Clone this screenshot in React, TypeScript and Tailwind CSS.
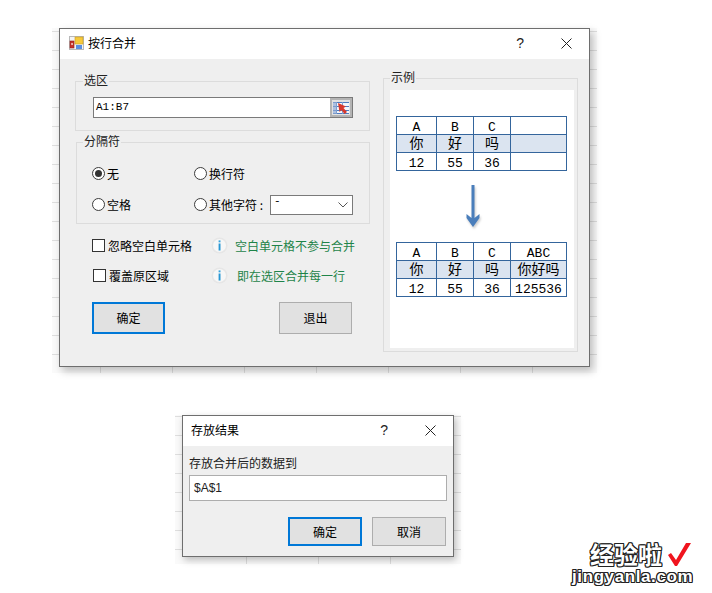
const cjk = "font-['Noto_Sans_CJK_SC','Noto_Sans',sans-serif]";

function AppIcon() {
  return (
    <svg width="15" height="14" viewBox="0 0 15 14" className="shrink-0">
      <rect x="0.5" y="0.5" width="14" height="13" fill="#f4f4f4" stroke="#b8b8b8" />
      <rect x="6" y="1" width="8" height="7" fill="#f6c93b" stroke="#c79a20" strokeWidth="0.6" />
      <rect x="1" y="5" width="4" height="7" fill="#c8322b" stroke="#8e1f1a" strokeWidth="0.6" />
      <rect x="2.3" y="7" width="1.5" height="2" fill="#f2d0c8" />
      <rect x="7" y="9" width="6" height="4" fill="#5a8fe0" />
    </svg>
  );
}

function RangeIcon() {
  return (
    <div className="flex h-[19px] w-[22px] items-center justify-center border-2 border-[#b4b4b4] bg-[#e2e2e2]">
      <svg width="16" height="12" viewBox="0 0 16 12">
        <rect x="0" y="0" width="16" height="12" fill="#f3f6fb" />
        <path d="M0 .5H16M0 4.5H16M0 8.5H16M0 11.5H16" stroke="#4d7cc0" strokeWidth="1" />
        <path d="M3.5 0V12M9.5 0V12" stroke="#7f9fcf" strokeWidth="1" />
        <rect x="0" y="0" width="3" height="12" fill="#8fa9d4" opacity="0.7" />
        <path d="M5 1L13 4.5L10.5 6L14 10L11.5 12L8.5 8L6.5 10Z" fill="#d8382c" />
      </svg>
    </div>
  );
}

function InfoIcon() {
  return (
    <svg width="17" height="17" viewBox="0 0 17 17" className="shrink-0">
      <circle cx="8.5" cy="8.5" r="8" fill="#e6e6e6" />
      <circle cx="8.5" cy="8.5" r="6.5" fill="#f7f7f7" />
      <rect x="7.6" y="3.4" width="1.9" height="1.9" fill="#35a3dc" />
      <rect x="7.6" y="6.5" width="1.9" height="7" fill="#2797d4" />
    </svg>
  );
}

function Radio({ checked, label, className = "" }: { checked?: boolean; label: string; className?: string }) {
  return (
    <div className={`flex items-center gap-[2px] ${className}`}>
      <span className="flex h-[13px] w-[13px] shrink-0 items-center justify-center rounded-full border border-[#3c3c3c] bg-white">
        {checked && <span className="h-[7px] w-[7px] rounded-full bg-[#333333]" />}
      </span>
      <span className="text-[12px] leading-[17px] text-black whitespace-pre">{label}</span>
    </div>
  );
}

function Group({ label, labelLeft, className, children }: { label: string; labelLeft: string; className: string; children?: React.ReactNode }) {
  return (
    <div className={`relative border border-[#dcdcdc] ${className}`}>
      <span className={`absolute -top-[10px] ${labelLeft} bg-[#efefef] px-[1px] text-[12px] leading-[16px] text-[#222222]`}>{label}</span>
      {children}
    </div>
  );
}

function WinButton({ label, primary, className = "" }: { label: string; primary?: boolean; className?: string }) {
  return (
    <button
      className={`flex items-center justify-center bg-[#e1e1e1] text-[12px] text-black ${
        primary ? "border-2 border-[#0078d7]" : "border border-[#adadad]"
      } ${className}`}
    >
      {label}
    </button>
  );
}

function TitleButtons() {
  return (
    <div className="flex items-center gap-[37px]">
      <span className="font-['Liberation_Sans',sans-serif] text-[14px] leading-none text-[#222222]">?</span>
      <svg width="11" height="11" viewBox="0 0 11 11">
        <path d="M.5.5L10.5 10.5M10.5.5L.5 10.5" stroke="#222222" strokeWidth="1" />
      </svg>
    </div>
  );
}

type Row = string[];

function ExampleTable({ rows }: { rows: Row[] }) {
  return (
    <div className="grid w-[171px] grid-cols-[40px_37px_37px_56px] border-t border-l border-[#34659c]">
      {rows.map((row, r) =>
        row.map((cell, c) => (
          <div
            key={`${r}-${c}`}
            className={`flex h-[18px] items-center justify-center whitespace-nowrap border-r border-b border-[#34659c] leading-none text-black ${
              r === 1
                ? "bg-[#dbe4f0] pb-[3px] text-[14px]"
                : "bg-white pt-[3px] font-['Liberation_Mono',monospace] text-[13px]"
            }`}
          >
            {cell}
          </div>
        )),
      )}
    </div>
  );
}

function Watermark() {
  const outline =
    "[text-shadow:1px_0_0_#222,-1px_0_0_#222,0_1px_0_#222,0_-1px_0_#222,1px_1px_0_#222,-1px_-1px_0_#222,1px_-1px_0_#222,-1px_1px_0_#222]";
  return (
    <div className={`absolute left-[572px] top-[541px] flex w-[126px] flex-col ${cjk}`}>
      <div className="flex h-[26px] items-center gap-[5px] pl-[18px]">
        <span className={`text-[24px] leading-[26px] font-bold text-white ${outline}`}>经验啦</span>
        <svg width="24" height="24" viewBox="0 0 24 24">
          <path d="M1 13L4 11L9 18L19 1H24L10 24H8Z" fill="#f0141e" />
        </svg>
      </div>
      <span className={`mt-[1px] font-['Liberation_Sans',sans-serif] text-[17px] leading-[18px] font-bold whitespace-nowrap text-white tracking-[0.6px] ${outline}`}>
        jingyanla.com
      </span>
    </div>
  );
}

const gridBg =
  "bg-[#fafafa] bg-[linear-gradient(#dedede_1px,transparent_1px),linear-gradient(90deg,#dedede_1px,transparent_1px)]";

export default function App() {
  return (
    <div className={`relative h-[593px] w-[712px] overflow-hidden bg-white ${cjk}`}>
      {/* spreadsheet behind first dialog */}
      <div className={`absolute left-[52px] top-[28px] h-[345px] w-[545px] ${gridBg} bg-[size:72px_19px] bg-[position:48px_3px]`} />
      {/* first dialog */}
      <div className="absolute left-[59px] top-[28px] flex h-[339px] w-[531px] flex-col border border-[#6e6e6e] bg-[#efefef] shadow-[3px_4px_8px_rgba(0,0,0,0.25)]">
        <div className="flex h-[30px] items-center bg-white pb-[2px] pl-[9px] pr-[17px]">
          <AppIcon />
          <span className="ml-[4px] flex-1 text-[12px] text-black">按行合并</span>
          <TitleButtons />
        </div>
        <div className="flex flex-1 pt-[18px]">
          <div className="ml-[15px] flex w-[296px] flex-col">
            <Group label="选区" labelLeft="left-[7px]" className="mt-[4px] h-[50px] w-[295px] pl-[17px] pt-[15px]">
              <div className="flex h-[21px] w-[260px] items-center justify-between border border-[#7a7a7a] bg-white pl-[2px] pr-0">
                <span className="font-['Liberation_Mono',monospace] text-[11px] leading-none text-black">A1:B7</span>
                <RangeIcon />
              </div>
            </Group>
            <Group label="分隔符" labelLeft="left-[6px]" className="ml-[1px] mt-[11px] h-[82px] w-[294px] pl-[15px] pt-[22px]">
              <div className="flex items-center">
                <Radio checked label="无" className="w-[102px]" />
                <Radio label="换行符" />
              </div>
              <div className="mt-[14px] flex items-center">
                <Radio label="空格" className="w-[102px]" />
                <Radio label="其他字符 :" className="w-[76px]" />
                <div className="-my-[3px] flex h-[20px] w-[83px] items-center justify-between border border-[#7a7a7a] bg-white pl-[3px] pr-[4px]">
                  <span className="-mt-[6px] font-['Liberation_Mono',monospace] text-[11px] leading-none text-black">-</span>
                  <svg width="10" height="6" viewBox="0 0 10 6">
                    <path d="M.5.5L5 5L9.5.5" fill="none" stroke="#555555" />
                  </svg>
                </div>
              </div>
            </Group>
            <div className="ml-[17px] mt-[13px] flex h-[17px] items-center">
              <span className="h-[13px] w-[13px] shrink-0 border border-[#333333] bg-white" />
              <span className="ml-[3px] w-[103px] text-[12px] text-black">忽略空白单元格</span>
              <InfoIcon />
              <span className="ml-[7px] whitespace-nowrap text-[12px] text-[#1e8449]">空白单元格不参与合并</span>
            </div>
            <div className="ml-[18px] mt-[13px] flex h-[17px] items-center">
              <span className="h-[13px] w-[13px] shrink-0 border border-[#333333] bg-white" />
              <span className="ml-[3px] w-[102px] text-[12px] text-black">覆盖原区域</span>
              <InfoIcon />
              <span className="ml-[9px] whitespace-nowrap text-[12px] text-[#1e8449]">即在选区合并每一行</span>
            </div>
            <div className="ml-[17px] mt-[18px] flex w-[260px] justify-between">
              <WinButton primary label="确定" className="h-[32px] w-[73px]" />
              <WinButton label="退出" className="h-[32px] w-[73px]" />
            </div>
          </div>
          <Group label="示例" labelLeft="left-[6px]" className="ml-[12px] mt-[1px] h-[274px] w-[195px] pl-[6px] pt-[11px]">
            <div className="flex h-[258px] w-[184px] flex-col items-start bg-white pl-[6px] pt-[26px]">
              <ExampleTable rows={[["A", "B", "C", ""], ["你", "好", "吗", ""], ["12", "55", "36", ""]]} />
              <svg width="16" height="43" viewBox="0 0 16 43" className="my-[14px] ml-[69px] drop-shadow-[1px_2px_1px_rgba(0,0,0,0.2)]">
                <path d="M6.5 0H9.5V33L14.5 29V33L8 42L1.5 33V29L6.5 33Z" fill="#4a7ebb" />
              </svg>
              <ExampleTable rows={[["A", "B", "C", "ABC"], ["你", "好", "吗", "你好吗"], ["12", "55", "36", "125536"]]} />
            </div>
          </Group>
        </div>
      </div>
      {/* spreadsheet behind second dialog */}
      <div className={`absolute left-[175px] top-[415px] h-[149px] w-[286px] ${gridBg} bg-[size:72px_19px] bg-[position:-1px_1px]`} />
      {/* second dialog */}
      <div className="absolute left-[182px] top-[415px] flex h-[142px] w-[272px] flex-col border border-[#6e6e6e] bg-[#efefef] shadow-[2px_3px_7px_rgba(0,0,0,0.25)]">
        <div className="flex h-[30px] items-center bg-white pb-[2px] pl-[8px] pr-[17px]">
          <span className="flex-1 text-[12px] text-black">存放结果</span>
          <TitleButtons />
        </div>
        <div className="flex flex-1 flex-col pl-[6px] pr-[6px] pt-[8px]">
          <span className="text-[12px] leading-[17px] text-[#222222]">存放合并后的数据到</span>
          <div className="mt-[4px] flex h-[26px] items-center border border-[#adadad] bg-white pl-[4px] font-['Liberation_Sans',sans-serif] text-[12px] text-[#222222]">
            $A$1
          </div>
          <div className="mt-[16px] flex justify-end gap-[10px] pr-[1px]">
            <WinButton primary label="确定" className="h-[29px] w-[74px]" />
            <WinButton label="取消" className="h-[29px] w-[74px]" />
          </div>
        </div>
      </div>
      <Watermark />
    </div>
  );
}
